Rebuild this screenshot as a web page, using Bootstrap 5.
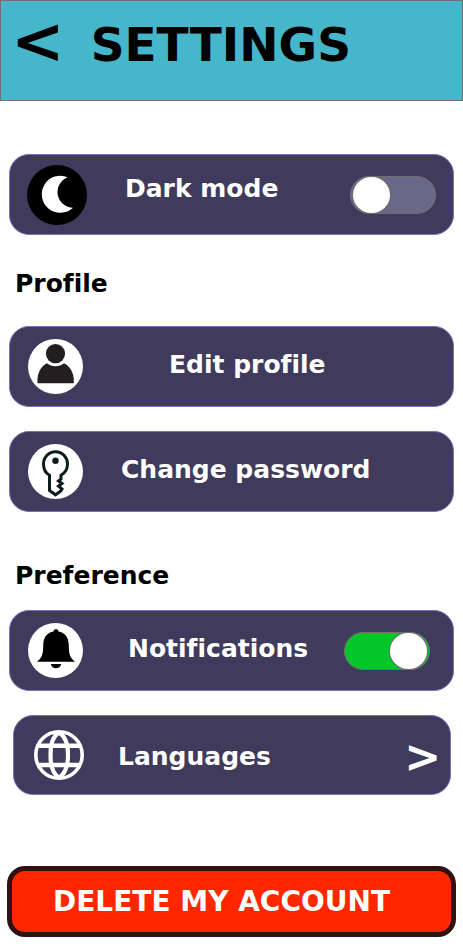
<!DOCTYPE html>
<html lang="en">
<head>
<meta charset="utf-8">
<meta name="viewport" content="width=device-width, initial-scale=1">
<title>Settings</title>
<link href="https://cdn.jsdelivr.net/npm/bootstrap@5.3.0/dist/css/bootstrap.min.css" rel="stylesheet">
<style>
body { font-family: "DejaVu Sans", sans-serif; font-weight: 700; font-variant-ligatures: none; background: #fff; color: #000; }
.topbar { background: #46b6cb; border: 1px solid #707070; height: 101px; padding: 0 16px 20px 10px; gap: 26px; }
.back-btn { font-size: 64px; line-height: 80px; font-weight: 700; color: #000; border: 0; background: none; padding: 0; }
.page-title { font-size: 47px; line-height: 56px; font-weight: 700; padding-top: 8px; }
.page-body { padding: 53px 7px 10px; }
.section-title { font-size: 25px; line-height: 30px; font-weight: 700; margin: 34px 8px 27px; }
.section-title.loose { margin-top: 49px; margin-bottom: 19px; }
.setting { height: 81px; margin: 0 2px; padding: 0 17px 0 18px; background: #403a5c; border: 1px solid #7a70bd; border-radius: 20px; color: #fff; font-size: 25px; line-height: 30px; text-decoration: none; white-space: nowrap; }
.setting + .setting { margin-top: 24px; }
.setting.inset { margin-left: 6px; margin-right: 5px; padding: 0 9px 0 20px; height: 80px; }
.setting.wide-end { padding-right: 23px; }
.setting-text { margin-left: 38px; padding-bottom: 3px; }
.setting-text.raised { padding-bottom: 11px; }
.setting-text.far { margin-left: 86px; }
.setting-text.mid { margin-left: 45px; }
.setting-text.near { margin-left: 34px; padding-bottom: 0; padding-top: 3px; }
.disc { width: 55px; height: 55px; flex: none; }
.disc.large { width: 60px; height: 60px; margin-left: -1px; }
.disc.small-disc { width: 50px; height: 50px; }
.go { font-size: 44px; line-height: 48px; padding-top: 4px; }
.form-check-input.toggle { width: 86px; height: 38px; margin: 0; border: 1px solid #707070; border-radius: 19px; background: #6a6789; position: relative; cursor: pointer; }
.form-check-input.toggle::before { content: ""; display: block; width: 37px; height: 36px; margin-left: 2px; border-radius: 50%; background: #fff; box-shadow: 0 0 0 1px #707070; }
.form-check-input.toggle:checked { background: #04c62a; }
.form-check-input.toggle:checked::before { margin-left: 45px; }
.delete-btn, .delete-btn:hover { width: 100%; height: 71px; margin-top: 71px; padding: 0 0 0 41px; background: #ff2600; border: 5px solid #2f1111; border-radius: 18px; color: #fff; font-size: 28px; line-height: 34px; font-weight: 700; text-align: left; white-space: nowrap; }
</style>
</head>
<body>
<header class="topbar d-flex align-items-center">
  <button type="button" class="back-btn" aria-label="Back">&lt;</button>
  <h1 class="page-title mb-0">SETTINGS</h1>
</header>
<main class="page-body">
  <div class="setting d-flex align-items-center">
    <svg class="disc large" viewBox="0 0 60 60" aria-hidden="true"><circle cx="30" cy="30" r="30"/><path fill="#fff" d="M40.700 12.300A18.500 18.500 0 1 0 46 42.700A15.700 15.700 0 0 1 40.700 12.300Z"/></svg>
    <label class="setting-text raised" for="dark-mode">Dark mode</label>
    <input class="form-check-input toggle ms-auto flex-shrink-0" type="checkbox" role="switch" id="dark-mode">
  </div>

  <h2 class="section-title">Profile</h2>
  <a href="#profile" class="setting d-flex align-items-center">
    <svg class="disc" viewBox="0 0 55 55" aria-hidden="true"><circle cx="27.500" cy="27.500" r="27.500" fill="#fff"/><g fill="#231f20"><circle cx="27.500" cy="14.600" r="9.600"/><path d="M9.500 44.200V41C9.500 34 13 27 19 24.200C23.500 28.200 31.500 28.200 36 24.200C42 27 45.800 34 45.800 41V44.200Z"/></g></svg>
    <span class="setting-text far">Edit profile</span>
  </a>
  <a href="#password" class="setting d-flex align-items-center">
    <svg class="disc" viewBox="0 0 55 55" aria-hidden="true"><circle cx="27.500" cy="27.500" r="27.500" fill="#fff"/><path d="M21.500 31.300C17.500 29 15.500 25 15.500 20A12 12.300 0 0 1 39.500 20C39.500 25 37 29 33 31.300V35L30.500 37L34 39.500L30.500 42L34 45L32.800 47L27.500 50.800L21.500 46.500Z" fill="none" stroke="#0c1b22" stroke-width="3"/><circle cx="27.500" cy="16.800" r="3.200" fill="#0c1b22"/></svg>
    <span class="setting-text">Change password</span>
  </a>

  <h2 class="section-title loose">Preference</h2>
  <div class="setting wide-end d-flex align-items-center">
    <svg class="disc" viewBox="0 0 55 55" aria-hidden="true"><circle cx="27.500" cy="27.500" r="27.500" fill="#fff"/><path d="M28 6C29.500 6 30.200 7 30.500 8.500C37 9.500 40.500 14.500 40.700 21C41 30 41 34 47 38.800H9C15 34 15 30 15.300 21C15.500 14.500 19 9.500 25.500 8.500C25.800 7 26.500 6 28 6ZM22.800 41H33.200C32.500 44 30.500 45.300 28 45.300C25.500 45.300 23.500 44 22.800 41Z"/></svg>
    <label class="setting-text mid" for="notifications">Notifications</label>
    <input class="form-check-input toggle ms-auto flex-shrink-0" type="checkbox" role="switch" id="notifications" checked>
  </div>
  <a href="#languages" class="setting inset d-flex align-items-center">
    <svg class="disc small-disc" viewBox="0 0 50 50" fill="none" stroke="#fff" aria-hidden="true"><circle cx="25" cy="25" r="23.200" stroke-width="3.600"/><path stroke-width="4.600" d="M5 15.700H45M5 35H45"/><path stroke-width="4.200" d="M25 2.500C19 6 16.500 15 16.500 25S19 44 25 47.500M25 2.500C31 6 34 15 34 25S31 44 25 47.500"/></svg>
    <span class="setting-text near">Languages</span>
    <span class="go ms-auto" aria-hidden="true">&gt;</span>
  </a>

  <button type="button" class="btn delete-btn">DELETE MY ACCOUNT</button>
</main>
<script src="https://cdn.jsdelivr.net/npm/bootstrap@5.3.0/dist/js/bootstrap.bundle.min.js"></script>
</body>
</html>
